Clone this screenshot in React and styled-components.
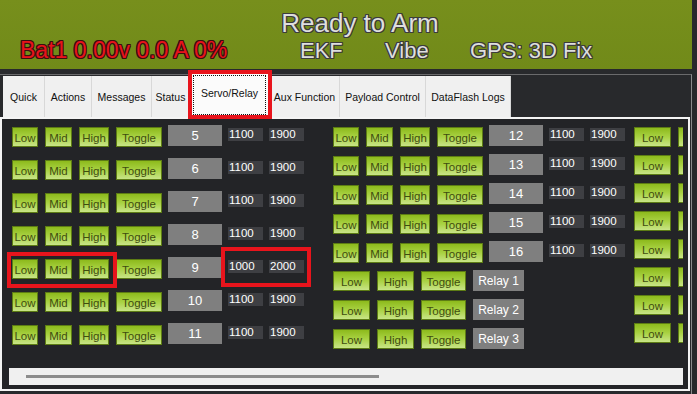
import React from 'react';
import styled, { createGlobalStyle } from 'styled-components';

const GlobalStyle = createGlobalStyle`
  html, body {
    margin: 0;
    padding: 0;
    background: #27282b;
  }
  * {
    box-sizing: border-box;
  }
`;

const Window = styled.div`
  position: relative;
  width: 697px;
  height: 394px;
  overflow: hidden;
  background: #28292c;
  font-family: 'Liberation Sans', Arial, sans-serif;
  display: flex;
  flex-direction: column;
`;

const Header = styled.div`
  width: 692px;
  height: 69px;
  flex-shrink: 0;
  background: linear-gradient(#778f1c, #718a19);
  padding-top: 10px;
`;

const outline = (c) => `-1px 0 ${c}, 1px 0 ${c}, 0 -1px ${c}, 0 1px ${c}, -1px -1px ${c}, 1px 1px ${c}, -1px 1px ${c}, 1px -1px ${c}`;

const TitleLine = styled.div`
  padding-left: 28px;
  text-align: center;
  font-size: 26px;
  line-height: 26px;
  color: #dedede;
  text-shadow: ${outline('#3c3c3c')};
`;

const StatusLine = styled.div`
  margin-top: 3px;
  padding-left: 20px;
  display: grid;
  grid-template-columns: 280px 85px 85px 1fr;
  align-items: baseline;
  line-height: 22px;
`;

const BatText = styled.span`
  font-size: 23px;
  color: #e8131b;
  text-shadow: ${outline('#3a1010')};
  white-space: nowrap;
`;

const HudText = styled.span`
  font-size: 22px;
  color: #dedede;
  text-shadow: ${outline('#3c3c3c')};
  white-space: nowrap;
`;

const TabControl = styled.div`
  width: 692px;
  margin-top: 5px;
  flex: 1;
  border-top: 1px solid #6a6a6c;
  border-right: 1px solid #8a8a8c;
  display: flex;
  flex-direction: column;
`;

const TabStrip = styled.div`
  height: 42px;
  flex-shrink: 0;
  padding-left: 3px;
  display: flex;
  align-items: flex-end;
`;

const Tab = styled.div`
  width: ${p => p.$w}px;
  height: ${p => (p.$active ? 45 : 41)}px;
  flex-shrink: 0;
  background: ${p => (p.$active ? '#fbfbfb' : '#f0f0f0')};
  border-right: 1px solid #d8d8d8;
  display: flex;
  align-items: center;
  justify-content: center;
  font-size: 10.5px;
  color: #111;
  padding: ${p => (p.$active ? '3px 3px 2px' : '0')};
`;

const FocusRect = styled.div`
  width: 100%;
  height: 100%;
  border: 1px dotted #111;
  display: flex;
  align-items: center;
  justify-content: center;
  padding-bottom: 4px;
`;

const Page = styled.div`
  width: 690px;
  height: 274px;
  flex-shrink: 0;
  border: 2px solid #f4f4f4;
  background: #232427;
  display: flex;
  flex-direction: column;
`;

const PageBody = styled.div`
  flex: 1;
  margin-right: 5px;
  overflow: hidden;
  padding: 6px 0 0 10px;
  display: flex;
  align-items: flex-start;
`;

const Column = styled.div`
  flex-shrink: 0;
  margin-left: ${p => p.$ml || 0}px;
  display: flex;
  flex-direction: column;
  gap: ${p => p.$gap}px;
  padding-top: ${p => p.$pt || 0}px;
`;

const ServoRow = styled.div`
  height: 21px;
  display: flex;
  align-items: flex-start;
  gap: 6px;
`;

const ButtonGroup = styled.div`
  display: flex;
  gap: 7px;
  margin-top: ${p => p.$mt}px;
`;

const GreenButton = styled.div`
  width: ${p => p.$w}px;
  height: 20px;
  flex-shrink: 0;
  border: 1px solid #5d7c14;
  background: linear-gradient(#8dba1c, #a9d243 50%, #c8e487);
  color: #3f4d10;
  font-size: 11.5px;
  display: flex;
  align-items: center;
  justify-content: center;
  padding-top: 1px;
  overflow: hidden;
`;

const NumberBox = styled.div`
  width: ${p => p.$w}px;
  height: 21px;
  flex-shrink: 0;
  background: #7f7f7f;
  color: #fff;
  font-size: ${p => p.$fs}px;
  display: flex;
  align-items: center;
  justify-content: center;
`;

const ValueBox = styled.div`
  width: 35px;
  height: 13px;
  margin-top: 3px;
  flex-shrink: 0;
  background: #3e3f43;
  color: #fff;
  font-size: 11.5px;
  line-height: 13px;
  padding-left: 1px;
`;

const RelayRow = styled.div`
  height: 21px;
  display: flex;
  align-items: flex-start;
  gap: 7px;
`;

const HScroll = styled.div`
  height: 17px;
  margin: 0 5px 4px 7px;
  flex-shrink: 0;
  background: #f0f0f0;
  padding: 7px 0 0 17px;
`;

const Thumb = styled.div`
  width: 353px;
  height: 3px;
  background: #8c8c8c;
`;

const Annotation = styled.div`
  position: absolute;
  left: ${p => p.$x}px;
  top: ${p => p.$y}px;
  width: ${p => p.$w}px;
  height: ${p => p.$h}px;
  border: 4px solid #e8141c;
  pointer-events: none;
`;

const tabs = [
  ['Quick', 42],
  ['Actions', 47],
  ['Messages', 60],
  ['Status', 38],
  ['Servo/Relay', 80, true],
  ['Aux Function', 70],
  ['Payload Control', 86],
  ['DataFlash Logs', 85],
];

const Servo = ({ n, lo = 1100, hi = 1900 }) => (
  <ServoRow>
    <ButtonGroup $mt={2}>
      <GreenButton $w={26}>Low</GreenButton>
      <GreenButton $w={27}>Mid</GreenButton>
      <GreenButton $w={30}>High</GreenButton>
      <GreenButton $w={46}>Toggle</GreenButton>
    </ButtonGroup>
    <NumberBox $w={54} $fs={13}>{n}</NumberBox>
    <ValueBox>{lo}</ValueBox>
    <ValueBox>{hi}</ValueBox>
  </ServoRow>
);

const Relay = ({ n }) => (
  <RelayRow>
    <ButtonGroup $mt={1}>
      <GreenButton $w={37}>Low</GreenButton>
      <GreenButton $w={37}>High</GreenButton>
      <GreenButton $w={45}>Toggle</GreenButton>
    </ButtonGroup>
    <NumberBox $w={51} $fs={12}>Relay {n}</NumberBox>
  </RelayRow>
);

// the third relay column runs past the page edge: only Low and the edge of the next button show
const RelayEdge = () => (
  <RelayRow>
    <ButtonGroup $mt={1}>
      <GreenButton $w={37}>Low</GreenButton>
      <GreenButton $w={6} />
    </ButtonGroup>
  </RelayRow>
);

export default function App() {
  return (
    <Window>
      <GlobalStyle />
      <Header>
        <TitleLine>Ready to Arm</TitleLine>
        <StatusLine>
          <BatText>Bat1 0.00v 0.0 A 0%</BatText>
          <HudText>EKF</HudText>
          <HudText>Vibe</HudText>
          <HudText>GPS: 3D Fix</HudText>
        </StatusLine>
      </Header>
      <TabControl>
        <TabStrip>
          {tabs.map(([label, w, active]) => (
            <Tab key={label} $w={w} $active={active}>
              {active ? <FocusRect>{label}</FocusRect> : label}
            </Tab>
          ))}
        </TabStrip>
        <Page>
          <PageBody>
            <Column $gap={12}>
              {[5, 6, 7, 8].map(n => <Servo key={n} n={n} />)}
              <Servo n={9} lo={1000} hi={2000} />
              {[10, 11].map(n => <Servo key={n} n={n} />)}
            </Column>
            <Column $ml={29} $gap={8}>
              {[12, 13, 14, 15, 16].map(n => <Servo key={n} n={n} />)}
              {[1, 2, 3].map(n => <Relay key={n} n={n} />)}
            </Column>
            <Column $ml={9} $gap={7} $pt={1}>
              {[4, 5, 6, 7, 8, 9, 10, 11].map(n => <RelayEdge key={n} />)}
            </Column>
          </PageBody>
          <HScroll>
            <Thumb />
          </HScroll>
        </Page>
      </TabControl>
      <Annotation $x={188} $y={70} $w={84} $h={49} />
      <Annotation $x={7} $y={252} $w={110} $h={36} />
      <Annotation $x={221} $y={247} $w={90} $h={40} />
    </Window>
  );
}
